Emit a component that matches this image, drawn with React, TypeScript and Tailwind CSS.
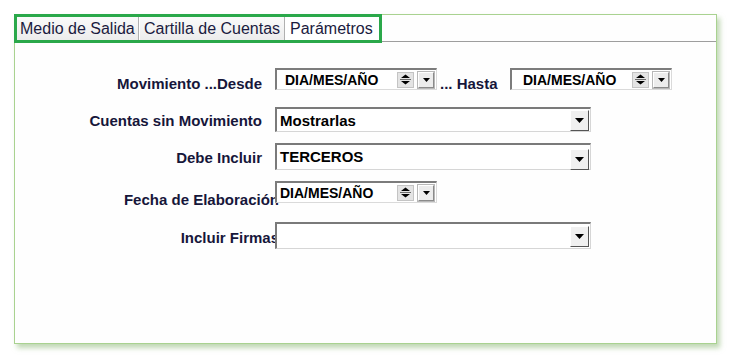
function Spinner() {
  return (
    <div className="flex h-[16px] w-[17px] items-center justify-center border border-[#c4c4c4] bg-[#e4e4e4]">
      <svg width="11" height="13" viewBox="0 0 11 13">
        <path d="M5.5 1.5 L10 5 L1 5 Z" fill="#000" />
        <rect x="0" y="6" width="11" height="1" fill="#6a6a6a" />
        <path d="M1 8 L10 8 L5.5 11.5 Z" fill="#000" />
      </svg>
    </div>
  )
}

function SmallDrop() {
  return (
    <div className="flex h-[16px] w-[16px] items-center justify-center border border-t-white border-l-white border-r-[#8a8a8a] border-b-[#8a8a8a] bg-[#ececec] outline outline-1 outline-[#b8b8b8]">
      <svg width="7" height="4" viewBox="0 0 7 4">
        <path d="M0 0 L7 0 L3.5 4 Z" fill="#000" />
      </svg>
    </div>
  )
}

function DateInput({ pad }: { pad: string }) {
  return (
    <div className="relative z-10 flex h-[22px] w-[162px] items-center border-t-2 border-l-2 border-r border-b border-t-[#7c7c7c] border-l-[#7c7c7c] border-r-[#dadada] border-b-[#dadada] bg-white">
      <span className={`flex-1 ${pad} text-[14px] font-bold leading-none text-black`}>DIA/MES/AÑO</span>
      <Spinner />
      <div className="w-[4px]" />
      <SmallDrop />
      <div className="w-[2px]" />
    </div>
  )
}

function Select({ value, h, align }: { value: string; h: string; align: string }) {
  return (
    <div className={`relative z-10 flex ${h} w-[316px] ${align} border-t-2 border-l-2 border-r border-b border-t-[#7a7a7a] border-l-[#7a7a7a] border-r-[#d6d6d6] border-b-[#d6d6d6] bg-white`}>
      <span className="flex-1 pl-[3px] text-[15px] font-bold leading-none text-black">{value}</span>
      <div className="mr-[1px] flex h-[21px] w-[19px] items-center justify-center self-center border border-t-white border-l-white border-r-[#555] border-b-[#555] bg-[#f0f0f0]">
        <svg width="9" height="5" viewBox="0 0 9 5">
          <path d="M0 0 L9 0 L4.5 5 Z" fill="#000" />
        </svg>
      </div>
    </div>
  )
}

const label = "whitespace-nowrap text-[15px] font-bold leading-none text-[#16163a]"

export default function App() {
  return (
    <div className="h-[357px] w-[730px] bg-white pl-[14px] pt-[14px]" style={{ fontFamily: '"Liberation Sans", Arial, sans-serif' }}>
      <div className="flex h-[330px] w-[703px] flex-col border border-[#a9d290] bg-[#fefefe] shadow-[3px_4px_5px_rgba(150,190,130,0.6)]">
        <div className="-ml-px -mt-px flex h-[29px]">
          <div className="flex border-[3px] border-[#2aa84a] bg-[#f2f2f2]">
            <div className="flex w-[121px] items-center bg-gradient-to-b from-[#fafafa] to-[#ececec] pl-[3px] text-[16px] leading-none text-[#1b1b40]">
              Medio de Salida
            </div>
            <div className="w-[1px] bg-[#b0b0b0]" />
            <div className="w-[1px] bg-white" />
            <div className="flex w-[144px] items-center bg-gradient-to-b from-[#fafafa] to-[#ececec] pl-[4px] text-[16px] leading-none text-[#1b1b40]">
              Cartilla de Cuentas
            </div>
            <div className="w-[1px] bg-[#b0b0b0]" />
            <div className="w-[1px] bg-white" />
            <div className="flex w-[93px] items-center bg-white pl-[4px] text-[16px] leading-none text-[#1b1b40]">
              Parámetros
            </div>
          </div>
          <div className="mb-[1px] flex-1 border-b border-[#9e9e9e]" />
        </div>

        <div className="flex flex-col pt-[25px]">
          <div className="flex items-start">
            <div className={`${label} w-[260px] pr-[13px] pt-[8px] text-right`}>Movimiento ...Desde</div>
            <DateInput pad="pl-[8px]" />
            <div className={`${label} w-[73px] pl-[3px] pt-[8px] text-left text-[#12124a]`}>... Hasta</div>
            <DateInput pad="pl-[11px]" />
          </div>

          <div className="mt-[16px] flex items-center">
            <div className={`${label} w-[260px] pr-[13px] pt-[2px] text-right`}>Cuentas sin Movimiento</div>
            <Select value="Mostrarlas" h="h-[25px]" align="items-center" />
          </div>

          <div className="mt-[11px] flex items-center">
            <div className={`${label} w-[260px] pr-[13px] pt-[2px] text-right`}>Debe Incluir</div>
            <Select value="TERCEROS" h="h-[27px] pt-[4px]" align="items-start" />
          </div>

          <div className="mt-[11px] flex items-start">
            <div className={`${label} -mr-[4px] w-[264px] pt-[11px] text-right`}>Fecha de Elaboración</div>
            <div className="relative z-10 flex h-[22px] w-[162px] items-center border-t-2 border-l-2 border-r border-b border-t-[#7c7c7c] border-l-[#7c7c7c] border-r-[#dadada] border-b-[#dadada] bg-white">
              <span className="flex-1 pl-[3px] text-[14px] font-bold leading-none text-black">DIA/MES/AÑO</span>
              <Spinner />
              <div className="w-[4px]" />
              <SmallDrop />
              <div className="w-[2px]" />
            </div>
          </div>

          <div className="mt-[15px] flex items-center">
            <div className={`${label} -mr-[4px] w-[264px] pt-[4px] text-right`}>Incluir Firmas</div>
            <Select value="" h="h-[27px]" align="items-center" />
          </div>
        </div>
      </div>
    </div>
  )
}
